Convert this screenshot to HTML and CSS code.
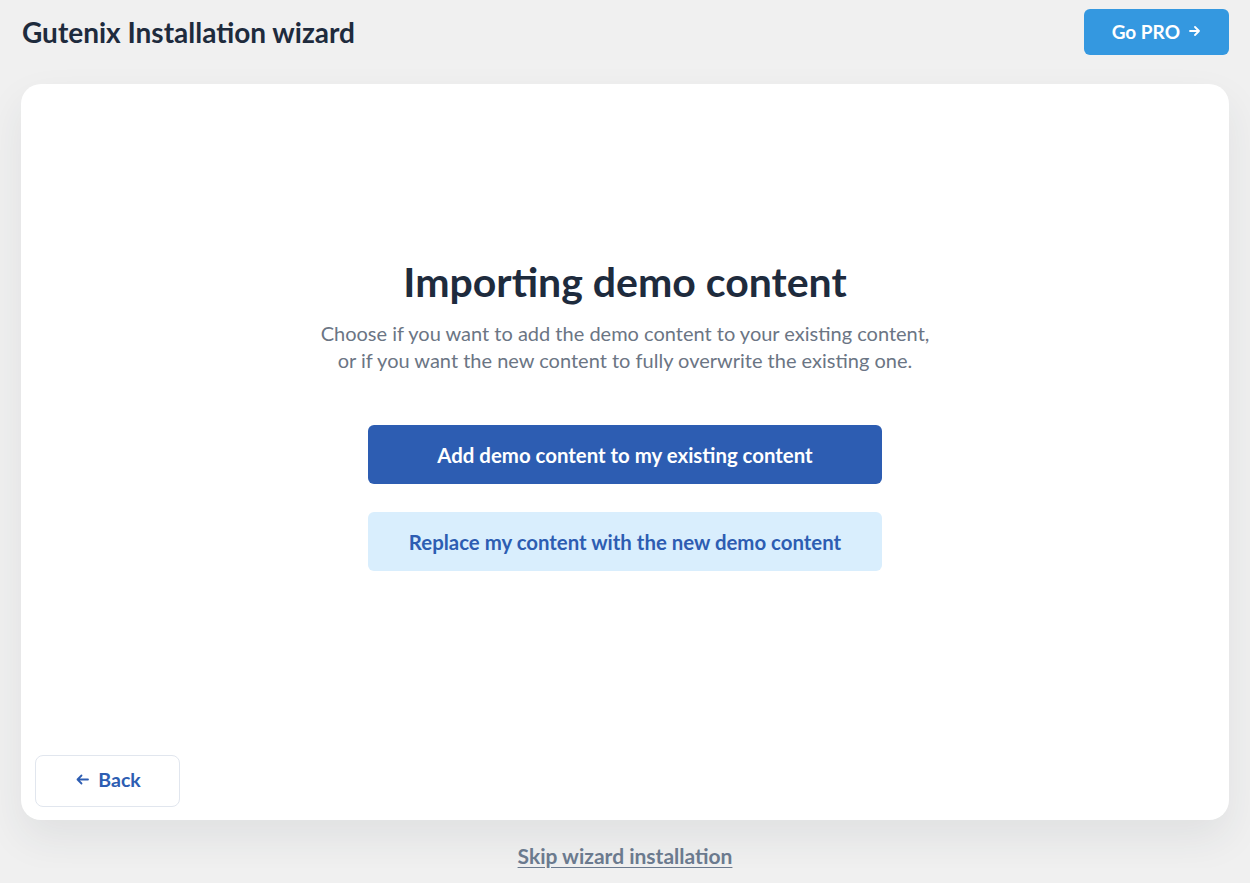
FILE: index.html
```html
<!DOCTYPE html>
<html lang="en">
<head>
  <meta charset="UTF-8">
  <meta name="viewport" content="width=device-width, initial-scale=1.0">
  <title>Gutenix Installation wizard</title>
  <link rel="stylesheet" href="styles.css">
</head>
<body>
  <header class="topbar">
    <h1 class="topbar-title">Gutenix Installation wizard</h1>
    <a class="btn-pro" href="#">
      Go PRO
      <svg class="icon" width="11" height="10" viewBox="0 0 11 10" fill="none" stroke="currentColor" stroke-width="1.8" stroke-linecap="round" stroke-linejoin="round">
        <path d="M1 5h9M6 1l4 4-4 4"/>
      </svg>
    </a>
  </header>

  <main class="wizard">
    <section class="step">
      <h2 class="step-title">Importing demo content</h2>
      <p class="step-text">
        Choose if you want to add the demo content to your existing content,<br>
        or if you want the new content to fully overwrite the existing one.
      </p>
      <div class="choices">
        <button class="btn btn-primary">Add demo content to my existing content</button>
        <button class="btn btn-light">Replace my content with the new demo content</button>
      </div>
    </section>

    <footer class="wizard-nav">
      <button class="btn-back">
        <svg class="icon" width="13" height="11" viewBox="0 0 13 11" fill="none" stroke="currentColor" stroke-width="1.8" stroke-linecap="round" stroke-linejoin="round">
          <path d="M12 5.5H1.5M5.5 1.5l-4 4 4 4"/>
        </svg>
        Back
      </button>
    </footer>
  </main>

  <div class="skip">
    <a href="#">Skip wizard installation</a>
  </div>
</body>
</html>
```

FILE: styles.css
```css
*, *::before, *::after {
  box-sizing: border-box;
}

html {
  background: #f0f0f0;
}

body {
  margin: 0;
  padding: 0 21px;
  font-family: Lato, "Open Sans", sans-serif;
  color: #1d2b3f;
}

.topbar {
  display: flex;
  align-items: flex-start;
  justify-content: space-between;
  padding-top: 9px;
  height: 84px;
}

.topbar-title {
  margin: 0;
  padding-left: 1px;
  font-size: 28px;
  font-weight: 700;
  line-height: 46px;
  color: #1e2b3d;
}

.btn-pro {
  display: flex;
  align-items: center;
  gap: 9px;
  height: 46px;
  padding: 0 29px 2px 28px;
  background: #3498e0;
  color: #fff;
  border-radius: 6px;
  font-size: 19px;
  font-weight: 700;
  text-decoration: none;
}

.icon {
  display: block;
}

.wizard {
  display: flex;
  flex-direction: column;
  height: 736px;
  background: #fff;
  border-radius: 20px;
  box-shadow: 0 18px 40px rgba(40, 50, 70, 0.08);
  padding: 0 14px 13px;
}

.step {
  flex: 1;
  display: flex;
  flex-direction: column;
  align-items: center;
  justify-content: center;
  padding-bottom: 10px;
}

.step-title {
  margin: 0 0 14px;
  font-size: 41px;
  font-weight: 700;
  line-height: 48px;
  color: #1e2b3d;
}

.step-text {
  margin: 0 0 51px;
  text-align: center;
  font-size: 20px;
  line-height: 27px;
  color: #6b7584;
}

.choices {
  display: flex;
  flex-direction: column;
  gap: 28px;
  width: 514px;
}

.btn {
  height: 59px;
  border: 0;
  border-radius: 6px;
  font-family: inherit;
  font-size: 20.4px;
  font-weight: 700;
  cursor: pointer;
}

.btn-primary {
  background: #2d5db2;
  color: #fff;
}

.btn-light {
  background: #d9eefd;
  color: #2d5db2;
}

.wizard-nav {
  display: flex;
}

.btn-back {
  display: flex;
  align-items: center;
  justify-content: center;
  gap: 9px;
  width: 145px;
  height: 52px;
  padding: 0 0 3px 2px;
  background: #fff;
  border: 1px solid #e1e6ee;
  border-radius: 8px;
  color: #2d5db2;
  font-family: inherit;
  font-size: 19.5px;
  font-weight: 700;
  cursor: pointer;
}

.skip {
  display: flex;
  justify-content: center;
  padding-top: 23px;
}

.skip a {
  color: #6b7a8e;
  font-size: 21px;
  font-weight: 700;
  text-decoration-thickness: 2px;
  text-underline-offset: 3px;
}
```
